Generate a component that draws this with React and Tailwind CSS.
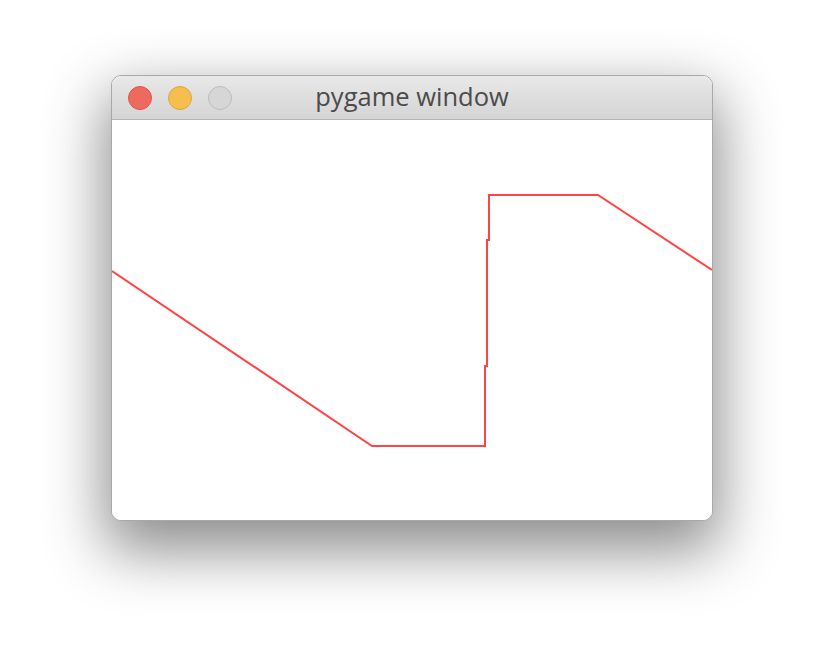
const wave = [
  [0, 151], [260, 326], [373, 326], [373, 246], [375, 246], [375, 120],
  [377, 120], [377, 75], [486, 75], [600, 150],
];

function TrafficLights() {
  return (
    <div className="absolute left-[16px] top-[10px] flex gap-4">
      <span className="w-6 h-6 rounded-full bg-[#ee6a5f] border border-[#d6574b]" />
      <span className="w-6 h-6 rounded-full bg-[#f6be4f] border border-[#dca640]" />
      <span className="w-6 h-6 rounded-full bg-[#d6d6d6] border border-[#bdbdbd]" />
    </div>
  );
}

export default function App() {
  return (
    <div className="w-[824px] h-[668px] bg-white pt-[75px]">
      <div className="mx-auto w-[602px] rounded-[10px] border border-[#a8a8a8] overflow-hidden shadow-[0_24px_60px_6px_rgba(0,0,0,0.45)] bg-white">
        {/* title bar */}
        <div className="relative h-[44px] bg-gradient-to-b from-[#e9e9e9] to-[#d4d4d4] border-b border-[#b4b4b4] flex items-center justify-center">
          <TrafficLights />
          <span className="text-[25.5px] leading-none text-[#4b4b4b] pb-[2px]" style={{ fontFamily: '"Open Sans", sans-serif' }}>
            pygame window
          </span>
        </div>

        {/* canvas */}
        <svg width="600" height="400" viewBox="0 0 600 400" className="block">
          <rect width="600" height="400" fill="#ffffff" />
          <polyline
            points={wave.map(([x, y]) => `${x},${y}`).join(' ')}
            fill="none"
            stroke="#ff3a3a"
            strokeWidth="2"
            strokeOpacity="0.95"
          />
        </svg>
      </div>
    </div>
  );
}
